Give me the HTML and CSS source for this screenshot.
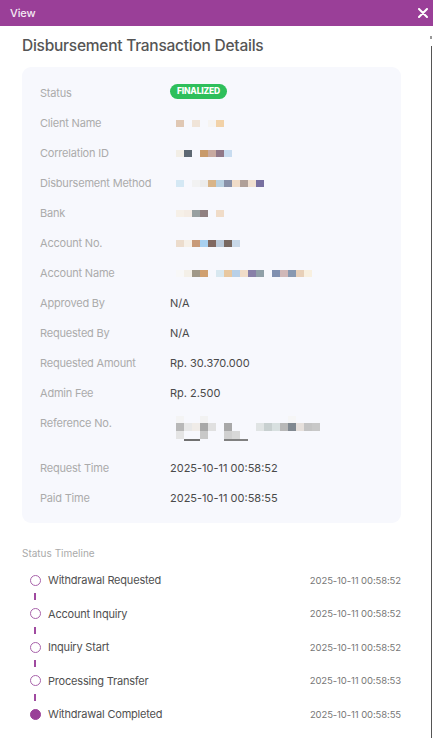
FILE: index.html
```html
<!DOCTYPE html>
<html>
<head>
<meta charset="utf-8">
<link rel="stylesheet" href="styles.css">
</head>
<body>
<div class="modal">
  <header class="bar">
    <span class="bar-title">View</span>
    <svg class="close" width="10" height="10" viewBox="0 0 10 10"><path d="M1 1L9 9M9 1L1 9" stroke="#fff" stroke-width="2" stroke-linecap="round"/></svg>
  </header>
  <div class="edge"><span class="edge-dot"></span><span class="edge-line"></span></div>
  <main class="content">
    <h1 class="title">Disbursement Transaction Details</h1>
    <section class="card">
      <div class="row"><span class="label">Status</span><span class="value"><span class="badge">FINALIZED</span></span></div>
      <div class="row"><span class="label">Client Name</span><span class="value">
        <svg class="blur" width="136" height="8"><rect x="0" y="0" width="8" height="7" fill="#e0c8b4"/><rect x="16" y="0" width="8" height="7" fill="#f0e4d8"/><rect x="32" y="0" width="8" height="7" fill="#f6f4f2"/><rect x="40" y="0" width="8" height="7" fill="#f2d2a8"/></svg></span></div>
      <div class="row"><span class="label">Correlation ID</span><span class="value">
        <svg class="blur" width="136" height="8"><rect x="0" y="0" width="8" height="7" fill="#f2eee6"/><rect x="8" y="0" width="8" height="7" fill="#5e6872"/><rect x="24" y="0" width="8" height="7" fill="#c89a6a"/><rect x="32" y="0" width="8" height="7" fill="#c8aaa0"/><rect x="40" y="0" width="8" height="7" fill="#907888"/><rect x="48" y="0" width="8" height="7" fill="#c8dcf0"/></svg></span></div>
      <div class="row"><span class="label">Disbursement Method</span><span class="value">
        <svg class="blur" width="136" height="8"><rect x="0" y="0" width="8" height="7" fill="#d4e8f4"/><rect x="16" y="0" width="8" height="7" fill="#f2f2f2"/><rect x="24" y="0" width="8" height="7" fill="#ececec"/><rect x="32" y="0" width="8" height="7" fill="#d8b488"/><rect x="40" y="0" width="8" height="7" fill="#b8d0e0"/><rect x="48" y="0" width="8" height="7" fill="#8890a8"/><rect x="56" y="0" width="8" height="7" fill="#f0dcc8"/><rect x="64" y="0" width="8" height="7" fill="#b0a098"/><rect x="72" y="0" width="8" height="7" fill="#f0e0d0"/><rect x="80" y="0" width="8" height="7" fill="#7870a0"/></svg></span></div>
      <div class="row"><span class="label">Bank</span><span class="value">
        <svg class="blur" width="136" height="8"><rect x="0" y="0" width="8" height="7" fill="#f6f0e8"/><rect x="8" y="0" width="8" height="7" fill="#f4ece4"/><rect x="16" y="0" width="8" height="7" fill="#98a0a0"/><rect x="24" y="0" width="8" height="7" fill="#908080"/><rect x="40" y="0" width="8" height="7" fill="#f0dcc8"/></svg></span></div>
      <div class="row"><span class="label">Account No.</span><span class="value">
        <svg class="blur" width="136" height="8"><rect x="0" y="0" width="8" height="7" fill="#ecdccc"/><rect x="8" y="0" width="8" height="7" fill="#f6f0e8"/><rect x="16" y="0" width="8" height="7" fill="#c89a78"/><rect x="24" y="0" width="8" height="7" fill="#a8d0f0"/><rect x="32" y="0" width="8" height="7" fill="#806860"/><rect x="40" y="0" width="8" height="7" fill="#b8c8d8"/><rect x="48" y="0" width="8" height="7" fill="#786860"/><rect x="56" y="0" width="8" height="7" fill="#c8d8e8"/></svg></span></div>
      <div class="row"><span class="label">Account Name</span><span class="value">
        <svg class="blur" width="136" height="8"><rect x="0" y="0" width="8" height="7" fill="#f8f8f8"/><rect x="8" y="0" width="8" height="7" fill="#f4f0e8"/><rect x="16" y="0" width="8" height="7" fill="#a09888"/><rect x="24" y="0" width="8" height="7" fill="#d0a070"/><rect x="40" y="0" width="8" height="7" fill="#d8e8f0"/><rect x="48" y="0" width="8" height="7" fill="#e8c8a0"/><rect x="56" y="0" width="8" height="7" fill="#b8d0e8"/><rect x="64" y="0" width="8" height="7" fill="#f0dcc8"/><rect x="72" y="0" width="8" height="7" fill="#8880a8"/><rect x="80" y="0" width="8" height="7" fill="#90a0a8"/><rect x="96" y="0" width="8" height="7" fill="#8090b0"/><rect x="104" y="0" width="8" height="7" fill="#d0b8b8"/><rect x="112" y="0" width="8" height="7" fill="#8898b0"/><rect x="120" y="0" width="8" height="7" fill="#e8d0b8"/><rect x="128" y="0" width="8" height="7" fill="#f8f0e0"/></svg></span></div>
      <div class="row"><span class="label">Approved By</span><span class="value text">N/A</span></div>
      <div class="row"><span class="label">Requested By</span><span class="value text">N/A</span></div>
      <div class="row"><span class="label">Requested Amount</span><span class="value text">Rp. 30.370.000</span></div>
      <div class="row"><span class="label">Admin Fee</span><span class="value text">Rp. 2.500</span></div>
      <div class="row row-tall"><span class="label">Reference No.</span><span class="value">
        <svg class="blur-ref" width="152" height="26"><rect x="0" y="0" width="8" height="7" fill="#f4f4f4"/><rect x="24" y="0" width="8" height="7" fill="#f2f2f2"/><rect x="112" y="0" width="8" height="7" fill="#f6f6f6"/>
        <rect x="0" y="7" width="8" height="8" fill="#b8b8b8"/><rect x="8" y="7" width="8" height="8" fill="#e8e8e8"/><rect x="16" y="7" width="8" height="8" fill="#f0ece8"/><rect x="24" y="7" width="8" height="8" fill="#a8a8a8"/><rect x="32" y="7" width="8" height="8" fill="#e0e0e0"/><rect x="48" y="7" width="8" height="8" fill="#a8a8a8"/><rect x="80" y="7" width="8" height="8" fill="#e0e4e4"/><rect x="88" y="7" width="8" height="8" fill="#c8d0d0"/><rect x="96" y="7" width="8" height="8" fill="#d8e0e0"/><rect x="104" y="7" width="8" height="8" fill="#b8b8b8"/><rect x="112" y="7" width="8" height="8" fill="#808890"/><rect x="120" y="7" width="8" height="8" fill="#e6e0dc"/><rect x="128" y="7" width="8" height="8" fill="#c4c4c4"/><rect x="136" y="7" width="8" height="8" fill="#c8c8c8"/>
        <rect x="0" y="15" width="8" height="8" fill="#e4e4e4"/><rect x="24" y="15" width="8" height="8" fill="#c8c8c8"/><rect x="48" y="15" width="8" height="8" fill="#d0d0d0"/><rect x="56" y="15" width="8" height="8" fill="#d8d8d8"/>
        <rect x="8" y="23" width="16" height="2" fill="#707070"/><rect x="48" y="23" width="24" height="2" fill="#808080"/></svg></span></div>
      <div class="row"><span class="label">Request Time</span><span class="value text">2025-10-11 00:58:52</span></div>
      <div class="row row-last"><span class="label">Paid Time</span><span class="value text">2025-10-11 00:58:55</span></div>
    </section>
    <section class="timeline">
      <h2 class="tl-title">Status Timeline</h2>
      <div class="tl-item"><span class="dot"></span><span class="tl-name">Withdrawal Requested</span><span class="tl-time">2025-10-11 00:58:52</span></div>
      <div class="tl-link"><span class="dash"></span></div>
      <div class="tl-item"><span class="dot"></span><span class="tl-name">Account Inquiry</span><span class="tl-time">2025-10-11 00:58:52</span></div>
      <div class="tl-link"><span class="dash"></span></div>
      <div class="tl-item"><span class="dot"></span><span class="tl-name">Inquiry Start</span><span class="tl-time">2025-10-11 00:58:52</span></div>
      <div class="tl-link"><span class="dash"></span></div>
      <div class="tl-item"><span class="dot"></span><span class="tl-name">Processing Transfer</span><span class="tl-time">2025-10-11 00:58:53</span></div>
      <div class="tl-link"><span class="dash"></span></div>
      <div class="tl-item"><span class="dot dot-filled"></span><span class="tl-name">Withdrawal Completed</span><span class="tl-time">2025-10-11 00:58:55</span></div>
    </section>
  </main>
</div>
</body>
</html>
```
FILE: styles.css
```css
* { box-sizing: border-box; }
html, body { margin: 0; padding: 0; background: #fff; }
body {
  font-family: "Inter", "Lato", "Liberation Sans", sans-serif;
  width: 433px;
  height: 738px;
  overflow: hidden;
}
.modal { position: relative; width: 433px; height: 738px; background: #fff; }
.bar {
  height: 26px;
  background: #9a3f98;
  display: flex;
  align-items: center;
  justify-content: space-between;
  padding: 0 5px 0 10px;
}
.bar-title { color: #f4eaf4; font-size: 11px; font-weight: 500; letter-spacing: -0.1px; }
.close { display: block; }
.edge { position: absolute; right: 0; top: 34px; bottom: 0; width: 3px; }
.edge-dot { position: absolute; left: 0; top: 2px; width: 2px; height: 3px; background: #999; }
.edge-line { position: absolute; right: 1px; top: 12px; bottom: 0; width: 1px; background: #555; }
.content { padding: 0 32px 0 22px; }
.title {
  margin: 10px 0 0;
  font-size: 15.5px;
  font-weight: 500;
  color: #555;
  letter-spacing: -0.25px;
  line-height: 20px;
}
.card {
  margin-top: 11px;
  background: #f7f8fd;
  border-radius: 9px;
  padding: 19px 18px 16px;
}
.row { display: flex; height: 30px; align-items: flex-start; }
.row-tall { height: 45px; }
.row-last { height: 16px; }
.label { width: 130px; font-size: 11px; color: #ababab; line-height: 14px; letter-spacing: -0.2px; }
.value { font-size: 11px; color: #4a4a4a; line-height: 14px; letter-spacing: 0; }
.value .blur { display: block; margin: 4px 0 0 6px; }
.value .blur-ref { display: block; margin: 0 0 0 6px; }
.badge {
  display: inline-block;
  background: #2ebf5b;
  color: #fff;
  font-size: 8.5px;
  font-weight: 800;
  line-height: 15px;
  height: 15px;
  padding: 0 7px;
  border-radius: 8px;
  letter-spacing: -0.2px;
  vertical-align: top;
  margin-top: -2px;
}
.timeline { margin-top: 24px; }
.tl-title { margin: 0 0 14px; font-size: 10px; font-weight: 400; color: #aaa; line-height: 12px; letter-spacing: 0; }
.tl-item { display: flex; align-items: center; height: 14px; padding-left: 8px; }
.dot {
  width: 11px; height: 11px;
  border: 1.5px solid #a862aa;
  border-radius: 50%;
  flex: none;
}
.dot-filled { background: #9a3f98; border-color: #9a3f98; }
.tl-name { margin-left: 7px; font-size: 11px; color: #505050; flex: 1; letter-spacing: -0.2px; }
.tl-time { font-size: 9.5px; color: #777; letter-spacing: -0.1px; }
.tl-link { height: 19.5px; padding-left: 12px; display: flex; align-items: center; }
.dash { width: 2px; height: 7px; background: #a04aa0; }
```
